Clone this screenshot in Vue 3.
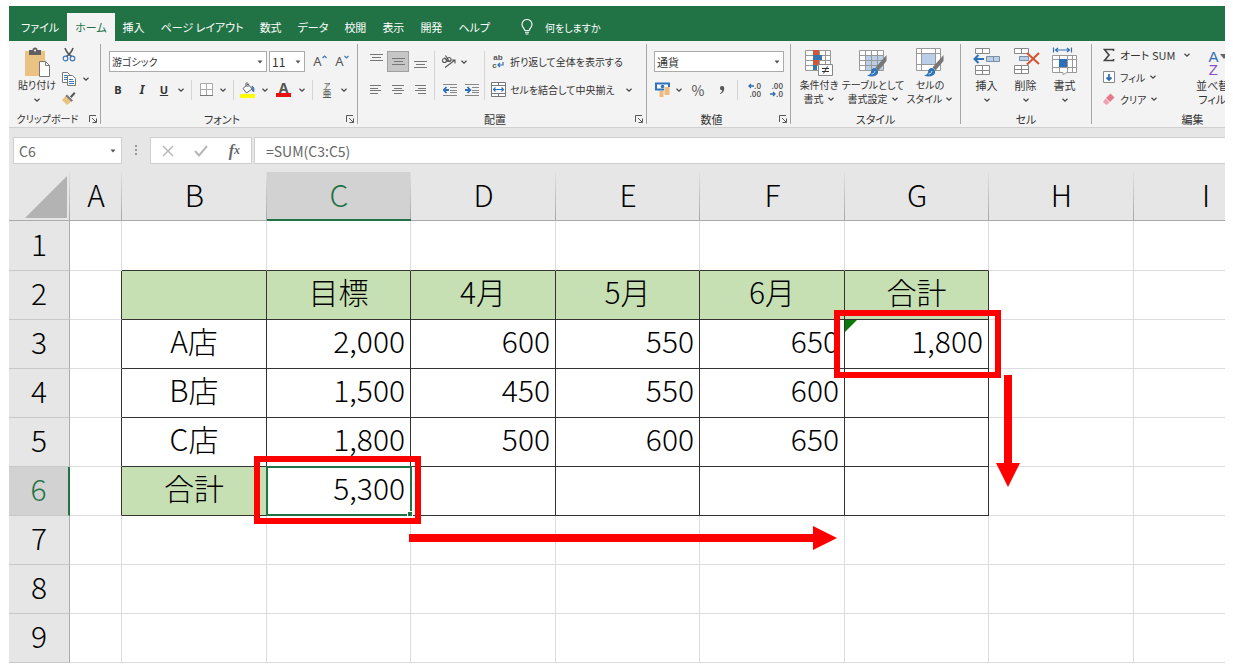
<script setup>
import { ref } from 'vue'

const tabs = ['ファイル', 'ホーム', '挿入', 'ページ レイアウト', '数式', 'データ', '校閲', '表示', '開発', 'ヘルプ']
const activeTab = ref('ホーム')

const columns = ['A', 'B', 'C', 'D', 'E', 'F', 'G', 'H', 'I']
const rows = [1, 2, 3, 4, 5, 6, 7, 8, 9]

const cells = {
  C2: '目標', D2: '4月', E2: '5月', F2: '6月', G2: '合計',
  B3: 'A店', C3: '2,000', D3: '600', E3: '550', F3: '650', G3: '1,800',
  B4: 'B店', C4: '1,500', D4: '450', E4: '550', F4: '600',
  B5: 'C店', C5: '1,800', D5: '500', E5: '600', F5: '650',
  B6: '合計', C6: '5,300',
}

const inTable = (c, r) => c >= 1 && c <= 6 && r >= 2 && r <= 6

function cellClass(c, r) {
  return {
    head: (r === 2 && inTable(c, r)) || (c === 1 && r === 6),
    center: r === 2 || c === 1,
    'line-right': inTable(c, r) || inTable(c + 1, r),
    'line-bottom': inTable(c, r) || inTable(c, r + 1),
  }
}

const nameBox = ref('C6')
const formula = ref('=SUM(C3:C5)')
</script>

<template>
  <div class="app">
    <svg class="defs" width="0" height="0" aria-hidden="true">
      <symbol id="chev" viewBox="0 0 8 8"><path d="M1.5 2.8 4 5.2 6.5 2.8" fill="none" stroke="#444" stroke-width="1.2" /></symbol>
      <symbol id="tri" viewBox="0 0 8 8"><path d="M1.5 2.5h5L4 5.5z" fill="#555" /></symbol>
      <symbol id="launch" viewBox="0 0 10 10"><path d="M1.5 8V1.500H8M4 4l4 4M8.500 4.500v4h-4" fill="none" stroke="#555" /></symbol>
      <symbol id="brush" viewBox="0 0 20 22">
        <path d="M19.500 0 8.500 12.500l3 3L19.500 6z" fill="#777" />
        <path d="M8 13c-3 0-4 2-4 4 0 2-2 3-4 3.500 5 2 10 .5 11-2.500.6-2-.8-4.500-3-5z" fill="#2f74b8" />
        <path d="M4.500 19c2 0 3-1 3.500-3" stroke="#cfe2f3" fill="none" />
      </symbol>
    </svg>

    <nav class="tabs">
      <button
        v-for="t in tabs" :key="t" class="tab" :class="{ active: t === activeTab }"
        @click="activeTab = t"
      >{{ t }}</button>
      <button class="tab tell">
        <svg width="12" height="16" viewBox="0 0 12 16" fill="none" stroke="#fff" stroke-width="1.100">
          <path d="M3.800 11.500c0-2-2.800-3-2.800-6a5 5 0 0 1 10 0c0 3-2.800 4-2.800 6zM4 13.300h4M4.500 15h3" />
        </svg>
        何をしますか
      </button>
    </nav>

    <div class="ribbon">
      <section class="group clipboard">
        <div class="body tall">
          <button class="big paste">
            <svg width="28" height="30" viewBox="0 0 28 30">
              <path d="M2 4h20v25H2z" fill="#eac282" />
              <path d="M6 3h3.500a2.500 2.500 0 0 1 5 0H18v5H6z" fill="#606060" />
              <circle cx="12" cy="3.500" r="1" fill="#fff" />
              <path d="M16.500 14.500h6l4 4v11h-10z" fill="#fff" stroke="#777" />
              <path d="M22.500 14.500v4h4" fill="none" stroke="#777" />
            </svg>
            <span>貼り付け</span>
            <svg class="chev"><use href="#chev" /></svg>
          </button>
          <div class="clip-tools">
            <button aria-label="切り取り">
              <svg width="14" height="15" viewBox="0 0 14 15" fill="none">
                <path d="M3 1c1 3 3 6 6.500 8.500M11 1C10 4 8 7 4.500 9.500" stroke="#555" stroke-width="1.600" />
                <circle cx="3.500" cy="11.500" r="2.300" stroke="#3c78b8" stroke-width="1.200" />
                <circle cx="10.500" cy="11.500" r="2.300" stroke="#3c78b8" stroke-width="1.200" />
              </svg>
            </button>
            <button class="split" aria-label="コピー">
              <svg width="14" height="14" viewBox="0 0 14 14">
                <path d="M.5.5h5l2 2v8h-7z" fill="#fff" stroke="#777" />
                <path d="M2 3.500h3M2 5.500h3M2 7.500h3" stroke="#3c78b8" />
                <path d="M5.500 3.500h5l3 3v7h-8z" fill="#fff" stroke="#777" />
                <path d="M7 7.500h4M7 9.500h5M7 11.500h5" stroke="#3c78b8" />
              </svg>
              <svg class="chev"><use href="#chev" /></svg>
            </button>
            <button aria-label="書式のコピー">
              <svg width="14" height="14" viewBox="0 0 14 14">
                <path d="M4 4.500 0 9l5 5 5-4z" fill="#eac282" />
                <path d="m5 3.500 6 6-1.500 1.200-6-5.700z" fill="#777" />
                <path d="m8 5.500 4-4.500 1.500 1.500L9.500 7z" fill="#555" />
              </svg>
            </button>
          </div>
        </div>
        <footer><span>クリップボード</span><button aria-label="クリップボードの設定"><svg width="10" height="10"><use href="#launch" /></svg></button></footer>
      </section>

      <section class="group font">
        <div class="body rows">
          <div class="row">
            <label class="combo family"><select aria-label="フォント"><option>游ゴシック</option></select><svg class="tri"><use href="#tri" /></svg></label>
            <label class="combo size"><select aria-label="フォント サイズ"><option>11</option></select><svg class="tri"><use href="#tri" /></svg></label>
            <button class="w22 grow" aria-label="フォント サイズの拡大">A<svg width="5" height="4" viewBox="0 0 5 4"><path d="m.5 3 2-2 2 2" fill="none" stroke="#3c78b8" stroke-width="1.200" /></svg></button>
            <button class="w22 grow" aria-label="フォント サイズの縮小">A<svg width="5" height="4" viewBox="0 0 5 4"><path d="m.5 1 2 2 2-2" fill="none" stroke="#3c78b8" stroke-width="1.200" /></svg></button>
          </div>
          <div class="row second">
            <button class="w24 bold">B</button>
            <button class="w24 italic">I</button>
            <button class="w20 under">U</button>
            <button class="w14" aria-label="下線の種類"><svg class="chev"><use href="#chev" /></svg></button>
            <i class="sep"></i>
            <button class="w20" aria-label="罫線">
              <svg width="13" height="13" viewBox="0 0 13 13" fill="#fff" stroke="#aaa"><path d="M.5.5h12v12H.5zM6.500.5v12M.5 6.500h12" /><path d="M0 12.500h13" stroke="#777" /></svg>
            </button>
            <button class="w14" aria-label="罫線の種類"><svg class="chev"><use href="#chev" /></svg></button>
            <i class="sep"></i>
            <button class="w20" aria-label="塗りつぶしの色">
              <svg width="16" height="16" viewBox="0 0 16 16">
                <path d="m3 6.500 5-4.500 4 5-5.500 4z" fill="#fff" stroke="#666" /><path d="M6 5V1.500C6 .5 8 .5 8 1.500V5" fill="none" stroke="#666" />
                <path d="M12 4c2 1 2.500 3.500 1.500 6-1-1-1.500-3-1.500-6z" fill="#3c78b8" stroke="#3c78b8" />
                <path d="M0 12h15v4H0z" fill="#ff0" />
              </svg>
            </button>
            <button class="w14" aria-label="塗りつぶしの色の一覧"><svg class="chev"><use href="#chev" /></svg></button>
            <button class="w22 fcolor">A</button>
            <button class="w14" aria-label="フォントの色の一覧"><svg class="chev"><use href="#chev" /></svg></button>
            <i class="sep"></i>
            <button class="w20 ruby"><small>ア</small><span>亜</span></button>
            <button class="w14" aria-label="ふりがなの設定"><svg class="chev"><use href="#chev" /></svg></button>
          </div>
        </div>
        <footer><span>フォント</span><button aria-label="フォントの設定"><svg width="10" height="10"><use href="#launch" /></svg></button></footer>
      </section>

      <section class="group align">
        <div class="body cols">
          <div class="rows">
            <div class="row">
              <button class="w22" aria-label="上揃え"><svg class="up" width="13" height="8" viewBox="0 0 13 8" stroke="#777"><path d="M0 .5h13M2 3.500h9M0 6.500h13" /></svg></button>
              <button class="w22 on" aria-label="上下中央揃え"><svg width="13" height="8" viewBox="0 0 13 8" stroke="#777"><path d="M0 .5h13M2 3.500h9M0 6.500h13" /></svg></button>
              <button class="w22" aria-label="下揃え"><svg class="down" width="13" height="8" viewBox="0 0 13 8" stroke="#777"><path d="M0 .5h13M2 3.500h9M0 6.500h13" /></svg></button>
            </div>
            <div class="row">
              <button class="w22" aria-label="左揃え"><svg width="12" height="9" viewBox="0 0 12 9" stroke="#777"><path d="M0 .5h11M0 3.500h8M0 5.500h11M0 8.500h8" /></svg></button>
              <button class="w22" aria-label="中央揃え"><svg width="12" height="9" viewBox="0 0 12 9" stroke="#777"><path d="M0 .5h12M2 3.500h8M0 5.500h12M2 8.500h8" /></svg></button>
              <button class="w22" aria-label="右揃え"><svg width="12" height="9" viewBox="0 0 12 9" stroke="#777"><path d="M1 .5h11M4 3.500h8M1 5.500h11M4 8.500h8" /></svg></button>
            </div>
          </div>
          <i class="sep long"></i>
          <div class="rows indent">
            <div class="row">
              <button class="w20" aria-label="方向">
                <svg width="16" height="14" viewBox="0 0 16 14" fill="none" stroke="#555" stroke-width="1.100">
                  <circle cx="3.500" cy="5.500" r="2" /><path d="m3.500 2.500 3 4" /><circle cx="8" cy="4.500" r="2" /><path d="m4.500.5 4 6M4 12.500 14 5M10.500 5H14v3.500" />
                </svg>
              </button>
              <button class="w14" aria-label="方向の一覧"><svg class="chev"><use href="#chev" /></svg></button>
            </div>
            <div class="row">
              <button class="w22" aria-label="インデントを減らす">
                <svg width="14" height="12" viewBox="0 0 14 12"><path d="M0 .5h14M7 3.500h7M7 6.500h7M7 8.500h7M0 11.500h14" stroke="#888" /><path d="M6 6H1M3.500 3 .7 6l2.800 3" fill="none" stroke="#2f6fb5" stroke-width="1.800" /></svg>
              </button>
              <button class="w22" aria-label="インデントを増やす">
                <svg width="14" height="12" viewBox="0 0 14 12"><path d="M0 .5h14M7 3.500h7M7 6.500h7M7 8.500h7M0 11.500h14" stroke="#888" /><path d="M0 6h5M2.500 3l2.800 3-2.800 3" fill="none" stroke="#2f6fb5" stroke-width="1.800" /></svg>
              </button>
            </div>
          </div>
          <i class="sep long"></i>
          <div class="rows wide">
            <button class="row text">
              <span class="wrap-icon"><b>ab</b><b>c<svg width="7" height="6" viewBox="0 0 7 6"><path d="M6 0v3H1M3 1 1 3l2 2" fill="none" stroke="#2f6fb5" stroke-width="1.200" /></svg></b></span>
              折り返して全体を表示する
            </button>
            <button class="row text">
              <span class="wrap-icon">
                <svg width="15" height="15" viewBox="0 0 15 15"><path d="M.5.5h14v14H.5zM7.500.5v3M7.500 11.500v3M.5 3.500h14M.5 11.500h14" fill="#fff" stroke="#777" /><path d="M2.500 7.500h10M4.500 5.500l-2 2 2 2M10.500 5.500l2 2-2 2" fill="none" stroke="#2f6fb5" stroke-width="1.200" /></svg>
              </span>
              <span class="merge">セルを結合して中央揃え</span>
              <svg class="chev"><use href="#chev" /></svg>
            </button>
          </div>
        </div>
        <footer><span>配置</span><button aria-label="配置の設定"><svg width="10" height="10"><use href="#launch" /></svg></button></footer>
      </section>

      <section class="group number">
        <div class="body rows">
          <div class="row">
            <label class="combo format"><select aria-label="表示形式"><option>通貨</option></select><svg class="tri"><use href="#tri" /></svg></label>
          </div>
          <div class="row">
            <button class="w20" aria-label="通貨表示形式">
              <svg width="15" height="15" viewBox="0 0 15 15">
                <path d="M1 1.500h13v6H1z" fill="#fff" stroke="#2f74b8" stroke-width="2" /><circle cx="7.500" cy="4.500" r="1.800" fill="#2f74b8" />
                <path d="M9 5h6v8H9z" fill="#f3f3f3" /><path d="M9.500 6h5M9.500 8h5M9.500 10h5M9.500 12h5M4.500 10h4M4.500 12h4M4.500 14h4" stroke="#eda85a" stroke-width="1.300" />
              </svg>
            </button>
            <button class="w14" aria-label="通貨の一覧"><svg class="chev"><use href="#chev" /></svg></button>
            <button class="w24 pct">%</button>
            <button class="w24" aria-label="桁区切りスタイル"><svg width="6" height="8" viewBox="0 0 6 8"><path d="M3 0a2.200 2.200 0 0 1 2.200 2.500C5.200 5 4 7 1.500 8L1 7.300C2.500 6.500 3.200 5.500 3.200 4.300A2.150 2.150 0 0 1 3 0z" fill="#555" /></svg></button>
            <i class="sep"></i>
            <button class="w22 dec"><b><svg width="6" height="6" viewBox="0 0 6 6"><path d="M6 3H1M3 1 1 3l2 2" fill="none" stroke="#2f6fb5" stroke-width="1.300" /></svg>.0</b><b>.00</b></button>
            <button class="w22 dec"><b>.00</b><b><svg width="6" height="6" viewBox="0 0 6 6"><path d="M0 3h5M3 1l2 2-2 2" fill="none" stroke="#2f6fb5" stroke-width="1.300" /></svg>.0</b></button>
          </div>
        </div>
        <footer><span>数値</span><button aria-label="表示形式の設定"><svg width="10" height="10"><use href="#launch" /></svg></button></footer>
      </section>

      <section class="group styles">
        <div class="body tall">
          <button class="big cond">
            <svg width="28" height="30" viewBox="0 0 28 30">
              <path d="M.5 3.500h25v20H.5zM.5 8.500h25M.5 13.500h25M.5 18.500h25M8.500 3.500v20M14.500 3.500v20M20.500 3.500v20" fill="#fff" stroke="#999" />
              <path d="M8 3h6v5H8zM8 13h6v5H8z" fill="#d0583a" /><path d="M8 8h9v5H8zM8 18h4v5H8z" fill="#3a76ae" />
              <path d="M13.500 17.500h14v11h-14z" fill="#fff" stroke="#888" /><path d="M17 21.500h7M17 24.500h7M22.500 19.500l-4 7" stroke="#333" />
            </svg>
            <span>条件付き</span>
            <span>書式<svg class="chev"><use href="#chev" /></svg></span>
          </button>
          <button class="big tbl">
            <svg width="28" height="30" viewBox="0 0 28 30">
              <path d="M.5 3.500h24v20H.5z" fill="#fff" /><path d="M6.500 8.500h18v15h-18z" fill="#b9cfe8" />
              <path d="M.5 3.500h24v20H.5zM.5 8.500h24M.5 13.500h24M.5 18.500h24M6.500 3.500v20M12.500 3.500v20M18.500 3.500v20" fill="none" stroke="#999" />
              <svg x="8" y="8" width="20" height="22"><use href="#brush" /></svg>
            </svg>
            <span>テーブルとして</span>
            <span>書式設定<svg class="chev"><use href="#chev" /></svg></span>
          </button>
          <button class="big cel">
            <svg width="28" height="30" viewBox="0 0 28 30">
              <path d="M.5 1.500h24v22H.5zM.5 6.500h24M.5 17.500h24M5.500 1.500v22M19.500 1.500v22" fill="#fff" stroke="#999" />
              <path d="M6 7h13v10H6z" fill="#b9cfe8" />
              <svg x="8" y="8" width="20" height="22"><use href="#brush" /></svg>
            </svg>
            <span>セルの</span>
            <span>スタイル<svg class="chev"><use href="#chev" /></svg></span>
          </button>
        </div>
        <footer><span>スタイル</span></footer>
      </section>

      <section class="group cellops">
        <div class="body tall">
          <button class="big op">
            <svg width="28" height="30" viewBox="0 0 28 30">
              <path d="M2.500 1.500h14v5h-14zM9.500 1.500v5M2.500 18.500h14v9h-14zM9.500 18.500v9M2.500 23.500h14" fill="#fff" stroke="#888" />
              <path d="M13.500 9.500h13v5h-13zM20.500 9.500v5" fill="#b9cfe8" stroke="#7b8fa5" /><path d="M11 12H2M5.500 8 1.500 12l4 4" fill="none" stroke="#2f6fb5" stroke-width="2" />
            </svg>
            <span>挿入</span>
            <svg class="chev"><use href="#chev" /></svg>
          </button>
          <button class="big op">
            <svg width="28" height="30" viewBox="0 0 28 30">
              <path d="M2.500 1.500h14v5h-14zM9.500 1.500v5M2.500 18.500h14v8h-14zM9.500 18.500v8M2.500 22.500h14" fill="#fff" stroke="#888" />
              <path d="M7.500 9.500h9v4h-9z" fill="#b9cfe8" stroke="#7b8fa5" /><path d="m15 6 12 11M27 6 15 17.500" stroke="#d8512f" stroke-width="2" />
            </svg>
            <span>削除</span>
            <svg class="chev"><use href="#chev" /></svg>
          </button>
          <button class="big op">
            <svg width="28" height="30" viewBox="0 0 28 30">
              <path d="M2.500.5v5M20.500.5v5M4 3h15M7 1 4.500 3 7 5M16 1l2.500 2L16 5" fill="none" stroke="#2f6fb5" stroke-width="1.200" />
              <path d="M1.500 8.500h24v17H16l-4 2v-2H1.500zM1.500 12.500h24M1.500 20.500h24M8.500 8.500v17M16.500 8.500v17M21.500 8.500v17" fill="#fff" stroke="#999" />
              <path d="M8 12h8v8H8z" fill="#2f6fb5" />
            </svg>
            <span>書式</span>
            <svg class="chev"><use href="#chev" /></svg>
          </button>
        </div>
        <footer><span>セル</span></footer>
      </section>

      <section class="group edit">
        <div class="body">
          <div class="edit-list">
            <button class="text sum">
              <svg width="14" height="14" viewBox="0 0 14 14"><path d="M11.500 3V1.500H2.500L7 7l-4.500 5.500h9V11" fill="none" stroke="#444" stroke-width="1.600" /></svg>
              <span>オート SUM</span><svg class="chev"><use href="#chev" /></svg>
            </button>
            <button class="text">
              <svg width="14" height="14" viewBox="0 0 14 14"><path d="M1.500 1.500h11v11h-11z" fill="#fff" stroke="#888" /><path d="M7 4v6M4.500 7.500 7 10l2.500-2.500" fill="none" stroke="#2f6fb5" stroke-width="1.800" /></svg>
              <span>フィル</span><svg class="chev"><use href="#chev" /></svg>
            </button>
            <button class="text">
              <svg width="14" height="14" viewBox="0 0 14 14"><path d="m8.500 1.500 4 4-4.500 4.500-4-4z" fill="#e8788c" /><path d="m3.500 6.500 4 4-2 2-1.500.2L1 10z" fill="#f0a0ae" /></svg>
              <span>クリア</span><svg class="chev"><use href="#chev" /></svg>
            </button>
          </div>
          <button class="big sort">
            <span class="az"><b>A</b><svg width="12" height="8" viewBox="0 0 12 8"><path d="M2 2h8L6 7z" fill="#666" /></svg><b>Z</b></span>
            <span>並べ替えと</span>
            <span>フィルター</span>
          </button>
        </div>
        <footer><span>編集</span></footer>
      </section>
    </div>

    <div class="formula-bar">
      <label class="name"><input v-model="nameBox" aria-label="名前ボックス"><svg class="tri"><use href="#tri" /></svg></label>
      <svg class="dots" width="28" height="14" viewBox="0 0 28 14" fill="#999"><path d="M13 1h2v2h-2zM13 5h2v2h-2zM13 9h2v2h-2z" /></svg>
      <div class="fx">
        <button aria-label="キャンセル"><svg width="12" height="12" viewBox="0 0 12 12"><path d="m1 1 10 10M11 1 1 11" stroke="#b4b4b4" stroke-width="1.400" /></svg></button>
        <button aria-label="入力"><svg width="14" height="12" viewBox="0 0 14 12"><path d="m1 6 4 4.500L13 1" fill="none" stroke="#b8b8b8" stroke-width="2" /></svg></button>
        <button class="fn"><i>f</i><small>x</small></button>
      </div>
      <input v-model="formula" class="formula" aria-label="数式バー">
    </div>

    <div class="sheet">
      <table>
        <colgroup>
          <col class="c-head"><col class="c-a"><col v-for="n in 8" :key="n" :class="n % 2 ? 'c-odd' : 'c-even'">
        </colgroup>
        <thead>
          <tr>
            <th class="corner"><svg width="42" height="42" viewBox="0 0 42 42"><path d="M42 0v42H0z" fill="#b3b3b3" /></svg></th>
            <th v-for="c in columns" :key="c" scope="col" :class="{ picked: c === 'C' }">{{ c }}</th>
          </tr>
        </thead>
        <tbody>
          <tr v-for="r in rows" :key="r">
            <th scope="row" :class="{ picked: r === 6 }">{{ r }}</th>
            <td v-for="(c, i) in columns" :key="c" :class="cellClass(i, r)">
              {{ cells[c + r] }}
              <template v-if="c + r === 'G3'">
                <svg class="flag" width="12" height="12"><path d="M0 0h12L0 12z" fill="#0b7a0b" /></svg>
                <span class="frame"></span>
                <svg class="arrow-down" width="24" height="112" viewBox="0 0 24 112"><path d="M8 0h8v88h8l-12 24L0 88h8z" fill="#f00" /></svg>
              </template>
              <template v-if="c + r === 'C6'">
                <span class="cursor"></span>
                <span class="frame shifted"></span>
                <svg class="arrow-right" width="428" height="24" viewBox="0 0 428 24"><path d="M0 8h404V0l24 12-24 12v-8H0z" fill="#f00" /></svg>
              </template>
            </td>
          </tr>
        </tbody>
      </table>
    </div>
  </div>
</template>

<style>
body { margin: 0; background: #fff; }
</style>

<style scoped>
.app {
  margin: 6px 8px 7px 9px;
  overflow: hidden;
  font-family: "Noto Sans CJK JP", "Noto Sans", sans-serif;
  font-size: 11px;
  color: #333;
}
.defs { position: absolute; }
button, input, select {
  font: inherit;
  color: inherit;
  border: 0;
  margin: 0;
  padding: 0;
  background: none;
  border-radius: 0;
}
button {
  display: flex;
  align-items: center;
  justify-content: center;
  flex: none;
  white-space: nowrap;
}
svg { flex: none; }
.chev, .tri { width: 8px; height: 8px; }

.tabs {
  display: flex;
  height: 35px;
  padding-left: 4px;
  align-items: flex-end;
  background: #217346;
  color: #fff;
  font-feature-settings: "palt";
}
.tab { height: 28px; padding: 0 8px; }
.tab.active { background: #f3f3f3; color: #217346; }
.tell { gap: 12px; padding-left: 23px; font-size: 10px; }

.ribbon {
  display: flex;
  padding: 3px 0;
  background: #f3f3f3;
  border-bottom: 1px solid #d0d0d0;
  overflow: hidden;
  font-feature-settings: "palt";
}
.group {
  display: flex;
  flex-direction: column;
  flex: none;
  box-sizing: border-box;
  height: 80px;
  border-right: 1px solid #a6a6a6;
}
.clipboard { width: 92px; font-size: 10px; }
.font { width: 257px; }
.align { width: 289px; }
.number { width: 144px; }
.styles { width: 170px; }
.cellops { width: 131px; }
.edit { width: 202px; }
.body { display: flex; flex: 1; }
.rows { display: flex; flex-direction: column; gap: 7px; }
.row { display: flex; align-items: center; height: 21px; }
.row button { height: 21px; }
footer { display: flex; height: 10px; line-height: 10px; }
footer span { flex: 1; text-align: center; }
footer button { width: 14px; height: 10px; }
.w14 { width: 14px; }
.w20 { width: 20px; }
.w22 { width: 22px; }
.w24 { width: 24px; }
.sep { width: 1px; height: 20px; margin: 0 4px 0 3px; background: #d4d4d4; }
.sep.long { height: 49px; }

.big { flex-direction: column; justify-content: flex-start; line-height: 14px; }
.big > span { display: flex; align-items: center; gap: 3px; height: 14px; }
.tall { padding-top: 3px; }
.big > svg:first-child { margin-bottom: 1px; }
.paste { width: 48px; margin-left: 4px; }
.big > .chev { margin-top: 4px; }
.clip-tools { display: flex; flex-direction: column; }
.clip-tools button { height: 21px; width: 14px; margin-left: 1px; justify-content: flex-start; align-items: flex-start; }
.clip-tools .split { width: 30px; gap: 6px; align-items: center; }
.clip-tools button:last-child { height: 16px; align-items: flex-end; }

.font .body, .number .body { padding: 7px 0 0 5px; }
.combo { position: relative; display: flex; box-sizing: border-box; height: 21px; border: 1px solid #ababab; background: #fff; }
.combo select { appearance: none; width: 100%; padding-left: 2px; }
.tri { position: absolute; right: 2px; top: 6px; pointer-events: none; }
.family { width: 158px; margin: 0 2px 0 3px; font-size: 10px; }
.size { width: 36px; margin-right: 4px; font-size: 12px; }
.format { width: 130px; margin-left: 2px; }
.grow { align-items: flex-start; font: 13px/20px "Noto Sans", sans-serif; color: #555; }
.grow svg { margin-top: 4px; }
.bold { font: bold 11px/20px "Noto Sans", sans-serif; }
.italic { font: italic bold 12px/20px "Noto Sans", sans-serif; }
.under { font: bold 11px/20px "Noto Sans", sans-serif; text-decoration: underline; }
.row .fcolor { height: 15px; font: bold 14px/12px "Noto Sans", sans-serif; border-bottom: 4px solid #e81010; width: 15px; margin: 0 4px; box-sizing: border-box; color: #555; }
.ruby { flex-direction: column; }
.ruby small { font-size: 7px; line-height: 7px; }
.ruby span { font-size: 9px; line-height: 9px; }

.align .body { padding: 7px 0 0 7px; }
.indent { width: 42px; }
.indent .w14 { width: 10px; }
.on { background: #c6c6c6; box-shadow: inset 0 0 0 1px #a0a0a0; }
.up { margin-bottom: 8px; }
.down { margin-top: 6px; }
.text { justify-content: flex-start; font-size: 10px; }
.wrap-icon { display: flex; flex-direction: column; align-items: center; width: 18px; margin-right: 3px; }
.wrap-icon b { display: flex; font: bold 8px/8px "Liberation Sans", sans-serif; color: #555; }
.merge { margin-right: 10px; }

.pct { font-size: 14px; color: #555; }
.dec { flex-direction: column; align-items: flex-end; padding-right: 3px; font-size: 8px; line-height: 8px; color: #444; }
.dec b { display: flex; align-items: center; font-weight: 500; }

.styles .body, .cellops .body { padding-left: 6px; }
.styles .big { font-size: 10px; }
.cond { width: 44px; }
.tbl { width: 64px; }
.cel { width: 50px; }
.op { width: 39px; }
.edit .body { padding-left: 10px; }
.edit-list { display: flex; flex-direction: column; width: 94px; }
.edit-list button { height: 22px; gap: 4px; }
.edit-list .sum { font-size: 11px; }
.edit-list .sum span { margin-right: 4px; }
.sort { padding-top: 3px; }
.big .az { display: grid; grid-template-columns: 10px 12px; height: 31px; gap: 0; align-content: center; width: 34px; margin-left: 6px; }
.az b { font: 15px/13px "Liberation Sans", sans-serif; color: #2f6fb5; }
.az b:last-child { color: #8a4fc0; }

.formula-bar { display: flex; padding: 9px 0 8px 4px; background: #e6e6e6; align-items: stretch; color: #666; }
.name { position: relative; display: flex; width: 109px; height: 27px; box-sizing: border-box; border: 1px solid #cfcfcf; background: #fff; }
.name input { width: 80px; padding-left: 5px; font-size: 14px; }
.name .tri { right: 4px; top: 9px; }
.dots { align-self: center; }
.fx { display: flex; justify-content: space-around; width: 102px; box-sizing: border-box; border: 1px solid #cfcfcf; background: #fff; }
.fx button { width: 33px; }
.fn { font: bold italic 16px "Liberation Serif", serif; }
.fn small { font-size: 12px; }
.formula { flex: 1; min-width: 0; box-sizing: border-box; margin-left: 2px; padding-left: 11px; border: 1px solid #cfcfcf; border-right: 0; background: #fff; font-size: 14px; }

.sheet { position: relative; overflow: hidden; isolation: isolate; }
table { table-layout: fixed; width: 1269px; border-collapse: separate; border-spacing: 0; font-size: 30px; font-weight: 300; line-height: 40px; color: #000; }
.c-head { width: 61px; }
.c-a { width: 52px; }
.c-odd { width: 145px; }
.c-even { width: 144px; }
th, td { box-sizing: border-box; height: 49px; padding: 0 5px 8px; overflow: visible; }
tbody tr:first-child > * { height: 50px; }
th { padding: 0 0 6px; font-weight: 300; text-align: center; background: #e6e6e6; }
thead th { padding-bottom: 4px; border-bottom: 1px solid #ababab; background: linear-gradient(#e0e0e0, #a8a8a8) right / 1px 100% no-repeat #e6e6e6; }
thead .corner { padding: 0; }
tbody th { border-right: 1px solid #ababab; border-bottom: 1px solid #c8c8c8; }
thead th.picked { background-color: #d2d2d2; border-bottom: 2px solid #217346; color: #217346; }
tbody th.picked { background: #d2d2d2; border-right: 2px solid #217346; color: #217346; }
.corner svg { display: block; margin: 4px 0 2px 16px; }
td { position: relative; text-align: right; border-right: 1px solid #dcdcdc; border-bottom: 1px solid #dcdcdc; }
td.center { text-align: center; }
td.head { background: #c6e0b4; }
td.line-right { border-right-color: #333; }
td.line-bottom { border-bottom-color: #333; }
.frame { position: absolute; z-index: 2; inset: -10px -13px -10px -11px; border: 6px solid #f00; }
.frame.shifted { inset: -11px -11px -9px -13px; }
.flag { position: absolute; left: 0; top: 0; }
.cursor { position: absolute; z-index: 1; inset: -1px -2px -1px -1px; border: 2px solid #217346; }
.cursor::after { content: ""; position: absolute; right: -3px; bottom: -3px; width: 4px; height: 4px; background: #217346; border: 1px solid #fff; }
.arrow-down { position: absolute; z-index: 2; left: 151px; top: 55px; }
.arrow-right { position: absolute; z-index: 2; left: 142px; top: 59px; }
</style>
